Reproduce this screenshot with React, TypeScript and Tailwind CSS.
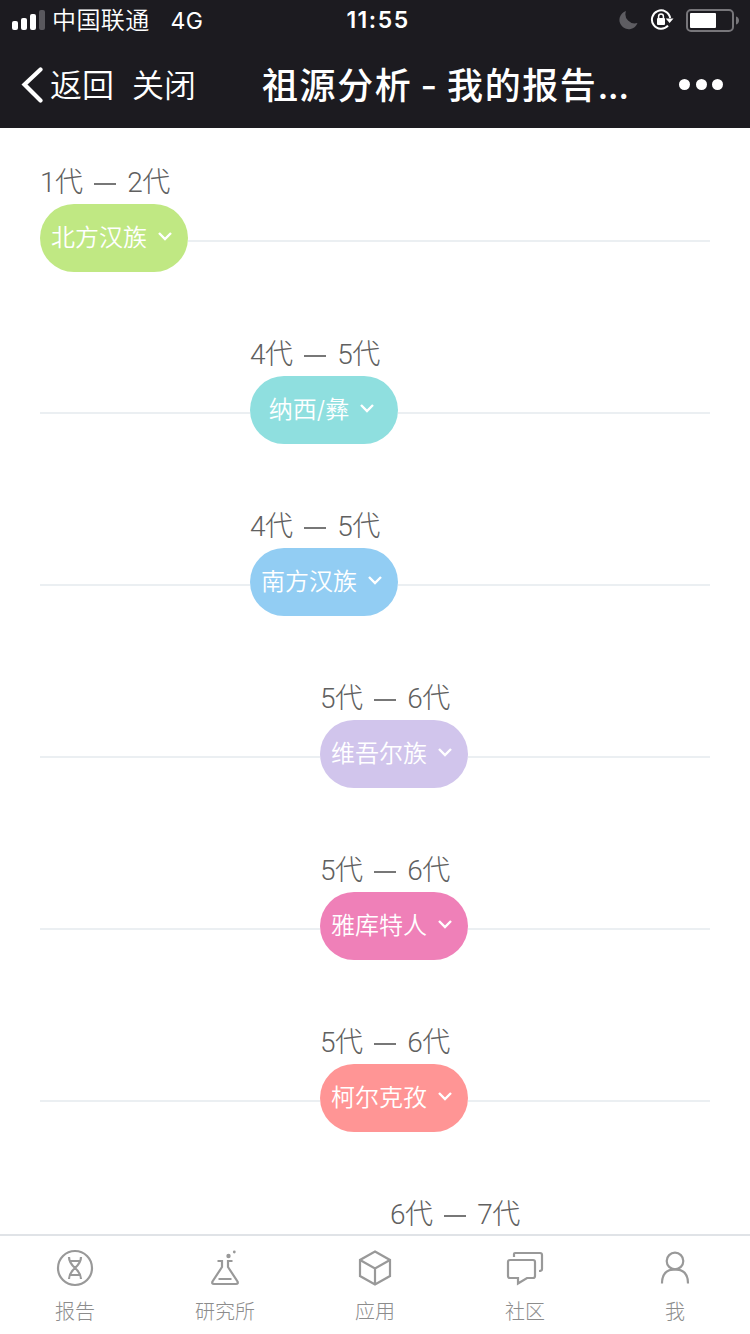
import React from 'react'

type Ancestry = {
  from: number
  to: number
  name?: string
  indent: string
  color?: string
}

const ancestries: Ancestry[] = [
  { from: 1, to: 2, name: '北方汉族', indent: 'w-0', color: 'bg-[#c0e883]' },
  { from: 4, to: 5, name: '纳西/彝', indent: 'w-[210px]', color: 'bg-[#8fdfdf]' },
  { from: 4, to: 5, name: '南方汉族', indent: 'w-[210px]', color: 'bg-[#92cdf3]' },
  { from: 5, to: 6, name: '维吾尔族', indent: 'w-[280px]', color: 'bg-[#d1c5ec]' },
  { from: 5, to: 6, name: '雅库特人', indent: 'w-[280px]', color: 'bg-[#ef80b8]' },
  { from: 5, to: 6, name: '柯尔克孜', indent: 'w-[280px]', color: 'bg-[#ff9595]' },
  { from: 6, to: 7, indent: 'w-[350px]' },
]

function StatusBar() {
  return (
    <div className="grid h-10 grid-cols-3 items-center text-[24px] leading-9">
      <div className="flex items-center pl-3">
        <svg className="h-5 w-[33px] shrink-0" viewBox="0 0 33 20" fill="#fff">
          <rect x="0" y="11" width="6" height="9" rx="2" />
          <rect x="9" y="8" width="6" height="12" rx="2" />
          <rect x="18" y="4" width="6" height="16" rx="2" />
          <rect x="27" y="0" width="6" height="20" rx="2" fill="#59585d" />
        </svg>
        <span className="ml-[7px] pt-[2px] font-[350] whitespace-nowrap tracking-[0.4px]">中国联通</span>
        <span className="ml-[21px] pt-px text-[23px] tracking-[0.2px]">4G</span>
      </div>
      <div className="pl-[6px] text-center text-[23px] font-semibold tracking-[1.5px]">11:55</div>
      <div className="flex items-center justify-end pr-[11px]">
        <svg className="h-5 w-5" viewBox="0 0 20 20">
          <path d="M7 1A9.3 9.3 0 1 0 18.5 13A9.3 9.3 0 0 1 7 1Z" fill="#5e5d62" />
        </svg>
        <svg className="ml-[11px] h-6 w-6" viewBox="0 0 24 24" fill="none">
          <path d="M20.2 10A9.2 9.2 0 1 0 18 17.7" stroke="#fff" strokeWidth="2" />
          <path d="M15.7 10.5H23.5L19.6 15Z" fill="#fff" />
          <rect x="7" y="10" width="8" height="7" rx="1" fill="#fff" />
          <path d="M8.6 10.5V8.4a2.4 2.4 0 0 1 4.8 0V10.5" stroke="#fff" strokeWidth="1.5" />
        </svg>
        <svg className="ml-3 h-6 w-[53px]" viewBox="0 0 53 24" fill="none">
          <rect x="1" y="2" width="46" height="21" rx="4" stroke="#77767a" strokeWidth="2" />
          <rect x="4" y="5" width="26" height="15" rx="1" fill="#fff" />
          <path d="M50 8.5c4 1 4 7 0 8z" fill="#77767a" />
        </svg>
      </div>
    </div>
  )
}

function NavBar() {
  return (
    <div className="flex h-[88px] items-center">
      <svg className="ml-5 h-[38px] w-6" viewBox="0 0 24 38" fill="none">
        <path d="M20.5 4.5L4.5 19.5L20.5 35.5" stroke="#fff" strokeWidth="4.2" strokeLinecap="round" />
      </svg>
      <div className="ml-[6px] flex w-[212px] gap-[18px] pt-1 text-[32px] font-[350]">
        <span>返回</span>
        <span>关闭</span>
      </div>
      <h1 className="w-[380px] pt-[3px] text-[36px] font-medium tracking-[1.6px] whitespace-nowrap [word-spacing:-3px]">
        祖源分析 - 我的报告<span className="tracking-[-0.5px]">...</span>
      </h1>
      <div className="ml-[37px] flex gap-[5.5px]">
        <i className="size-[11px] rounded-full bg-white" />
        <i className="size-[11px] rounded-full bg-white" />
        <i className="size-[11px] rounded-full bg-white" />
      </div>
    </div>
  )
}

function AncestryRow({ item }: { item: Ancestry }) {
  return (
    <div className="h-[172px]">
      <div className="flex h-[38px]">
        <div className={`shrink-0 ${item.indent}`} />
        <div className="flex items-center pb-1 font-['Roboto','Noto_Sans_CJK_SC',sans-serif] text-[28px] leading-[32px] font-light tracking-[-0.6px] whitespace-nowrap text-[#606060]">
          <span>{item.from}代</span>
          <i className="mr-[11px] ml-3 mt-[2px] h-[2px] w-[22px] bg-[#777]" />
          <span>{item.to}代</span>
        </div>
      </div>
      {item.name && (
        <div className="flex h-[68px] items-start">
          <div className={`mt-9 h-[2px] shrink-0 bg-[#ebeff2] ${item.indent}`} />
          <button className={`flex h-[68px] w-[148px] shrink-0 items-center justify-center rounded-full text-white ${item.color}`}>
            <span className="text-[24px] leading-8 font-[350]">{item.name}</span>
            <svg className="mb-[2px] h-6 w-[30px]" viewBox="0 0 30 24" fill="none">
              <path d="M12 8L18 14L24 8" stroke="currentColor" strokeWidth="2.4" />
            </svg>
          </button>
          <div className="mt-9 h-[2px] flex-1 bg-[#ebeff2]" />
        </div>
      )}
    </div>
  )
}

const tabs = [
  {
    label: '报告',
    icon: (
      <>
        <circle cx="20" cy="20" r="17" />
        <path d="M14 9C14 20 26 20 26 31M26 9C26 20 14 20 14 31M15 13h10M15 27h10" />
      </>
    ),
  },
  {
    label: '研究所',
    icon: (
      <>
        <path d="M12.5 13H17V19L7.5 33.5Q6.5 36 9 36H31Q33.5 36 32.5 33.5L23 19V13H27.5M13.5 31H26.5" />
        <circle cx="23.5" cy="8" r="2.2" fill="#999" stroke="none" />
        <circle cx="29.3" cy="4" r="1.4" fill="#999" stroke="none" />
      </>
    ),
  },
  {
    label: '应用',
    icon: <path d="M20 3.5L35 12V28L20 36.5L5 28V12ZM5.5 12.3L20 20.5L34.5 12.3M20 20.5V36.5" />,
  },
  {
    label: '社区',
    icon: (
      <>
        <path d="M9 9V6Q9 5 10 5H35Q37 5 37 7V21Q37 23 34 23" />
        <path d="M5 12H28Q30 12 30 14V28Q30 30 28 30H22L13 35.5V30H5Q3 30 3 28V14Q3 12 5 12Z" />
      </>
    ),
  },
  {
    label: '我',
    icon: (
      <>
        <circle cx="20" cy="13" r="8.3" />
        <path d="M7 35.5C7 26 12 21.3 20 21.3S33 26 33 35.5" />
      </>
    ),
  },
]

function TabBar() {
  return (
    <nav className="grid h-[100px] grid-cols-5 border-t-2 border-[#e0e3e7] bg-white">
      {tabs.map((tab) => (
        <div key={tab.label} className="flex flex-col items-center pt-3">
          <svg className="size-10" viewBox="0 0 40 40" fill="none" stroke="#999" strokeWidth="2.2">
            {tab.icon}
          </svg>
          <span className="mt-2 text-[20px] leading-8 font-light text-[#8c8c8c]">{tab.label}</span>
        </div>
      ))}
    </nav>
  )
}

function App() {
  return (
    <div className="flex h-[1334px] w-[750px] flex-col overflow-hidden bg-white font-['Inter','Noto_Sans_CJK_SC',sans-serif]">
      <header className="h-32 shrink-0 bg-[#1c1b20] text-white">
        <StatusBar />
        <NavBar />
      </header>
      <main className="min-h-0 flex-1 overflow-hidden px-10 pt-[38px]">
        {ancestries.map((item, index) => (
          <AncestryRow key={index} item={item} />
        ))}
      </main>
      <TabBar />
    </div>
  )
}

export default App
